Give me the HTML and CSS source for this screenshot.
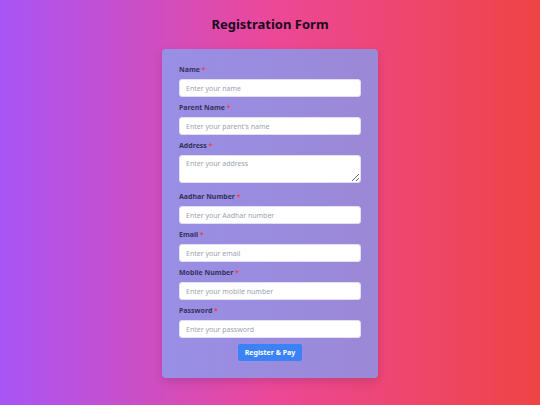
FILE: index.html
```html
<!DOCTYPE html>
<html lang="en">
<head>
<meta charset="utf-8">
<title>Registration Form</title>
<link rel="stylesheet" href="styles.css">
</head>
<body>
<main class="page">
  <h1 class="title">Registration Form</h1>
  <form class="card">
    <div class="field">
      <label class="label">Name <span class="req">*</span></label>
      <input class="input" type="text" placeholder="Enter your name">
    </div>
    <div class="field">
      <label class="label">Parent Name <span class="req">*</span></label>
      <input class="input" type="text" placeholder="Enter your parent's name">
    </div>
    <div class="field field-area">
      <label class="label">Address <span class="req">*</span></label>
      <textarea class="input textarea" placeholder="Enter your address"></textarea>
    </div>
    <div class="field">
      <label class="label">Aadhar Number <span class="req">*</span></label>
      <input class="input" type="text" placeholder="Enter your Aadhar number">
    </div>
    <div class="field">
      <label class="label">Email <span class="req">*</span></label>
      <input class="input" type="email" placeholder="Enter your email">
    </div>
    <div class="field">
      <label class="label">Mobile Number <span class="req">*</span></label>
      <input class="input" type="text" placeholder="Enter your mobile number">
    </div>
    <div class="field">
      <label class="label">Password <span class="req">*</span></label>
      <input class="input" type="password" placeholder="Enter your password">
    </div>
    <div class="actions">
      <button class="btn" type="button">Register &amp; Pay</button>
    </div>
  </form>
</main>
</body>
</html>
```

FILE: styles.css
```css
* { box-sizing: border-box; }
html, body { margin: 0; padding: 0; }
body {
  width: 540px;
  height: 405px;
  overflow: hidden;
  font-family: "Noto Sans", "Open Sans", sans-serif;
  background: linear-gradient(to right, #a855f7 0%, #ec4899 50%, #ef4444 100%);
}
.page {
  display: flex;
  flex-direction: column;
  align-items: center;
  padding-top: 15px;
}
.title {
  margin: 0 0 16px;
  font-size: 13px;
  line-height: 18px;
  font-weight: 700;
  color: #1b0b1e;
}
.card {
  width: 216px;
  padding: 16px 17px 17px;
  border-radius: 4px;
  background: linear-gradient(to right, #998fe6, #9b88d6);
  box-shadow: 0 4px 10px rgba(60, 20, 80, 0.18);
}
.field {
  display: flex;
  flex-direction: column;
  margin-bottom: 6px;
}
.field-area { margin-bottom: 9px; }
.label {
  font-size: 7px;
  line-height: 10px;
  font-weight: 700;
  color: #34335a;
  margin-bottom: 4px;
}
.req { color: #ef4444; }
.input {
  display: block;
  width: 100%;
  height: 18px;
  margin: 0;
  padding: 0 6px;
  border: 1px solid #e2e0f0;
  border-radius: 3px;
  background: #ffffff;
  font-family: "Noto Sans", "Open Sans", sans-serif;
  font-size: 7px;
  color: #374151;
  outline: none;
}
.input::placeholder { color: #9ca3af; }
.textarea {
  height: 28px;
  padding: 3px 6px;
  line-height: 10px;
  resize: vertical;
}
.actions {
  display: flex;
  justify-content: center;
}
.btn {
  height: 17px;
  padding: 0 7px;
  border: 0;
  border-radius: 2px;
  background: #3b82f6;
  color: #ffffff;
  font-family: "Noto Sans", "Open Sans", sans-serif;
  font-size: 7px;
  font-weight: 700;
}
```
